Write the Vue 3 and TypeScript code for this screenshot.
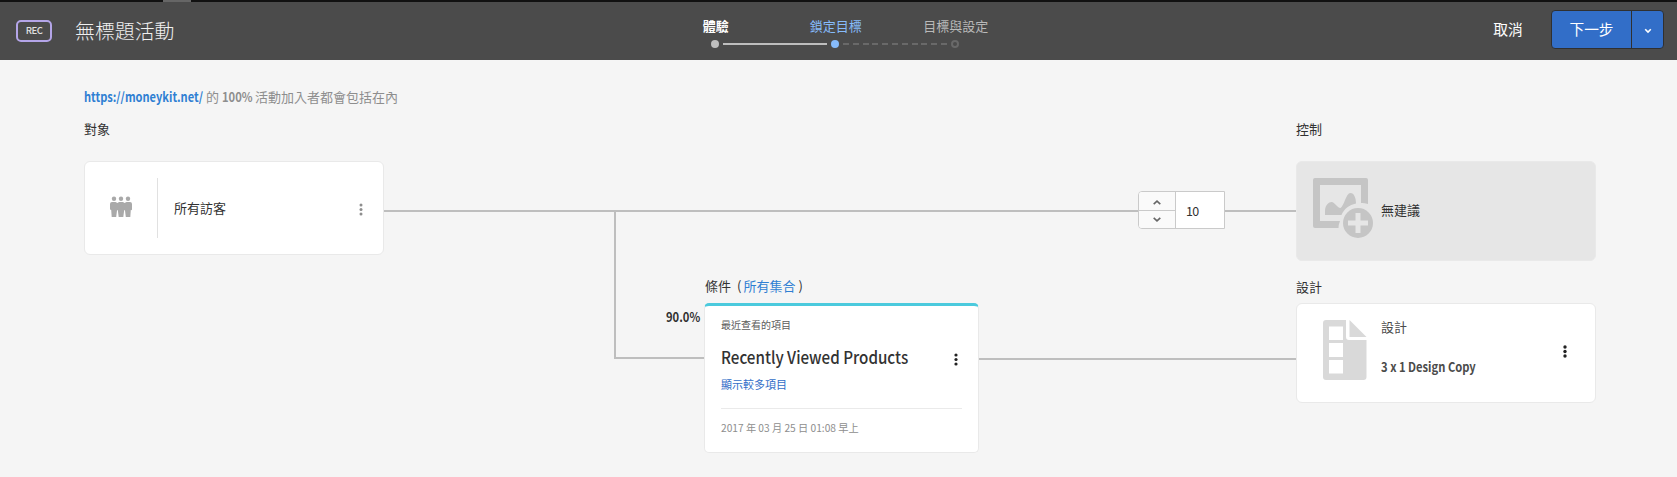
<script setup lang="ts">
import { ref } from 'vue'

interface Step {
  label: string
  state: 'done' | 'current' | 'todo'
}

const steps: Step[] = [
  { label: '體驗', state: 'done' },
  { label: '鎖定目標', state: 'current' },
  { label: '目標與設定', state: 'todo' },
]
const controlShare = ref(10)
const dots = [2, 6.5, 11]
</script>

<template>
  <div class="page">
    <header class="bar">
      <div class="strip"><span class="strip-tab"></span></div>
      <div class="bar-row">
        <span class="badge">REC</span>
        <h1 class="title">無標題活動</h1>
        <ol class="steps">
          <li v-for="s in steps" :key="s.label" class="step" :class="s.state">
            <span class="step-label">{{ s.label }}</span>
            <span class="step-dot"></span>
          </li>
        </ol>
        <button class="cancel">取消</button>
        <div class="split">
          <button class="next">下一步</button>
          <button class="more" aria-label="more">
            <svg width="8" height="6" viewBox="0 0 8 6"><path d="M1.2 1.2 4 4 6.8 1.2" fill="none" stroke="#fff" stroke-width="1.6" /></svg>
          </button>
        </div>
      </div>
    </header>

    <main class="canvas">
      <svg class="wires" width="1677" height="417" viewBox="0 60 1677 417">
        <path d="M384 211H1296M615 211V358H704M978 359H1296" fill="none" stroke="#bebebe" stroke-width="2" />
      </svg>

      <p class="label intro">
        <span class="url"><b class="narrow">https://moneykit.net/</b></span>
        <span class="of">的</span>
        <span class="pct"><b class="narrow">100%</b></span>
        <span>活動加入者都會包括在內</span>
      </p>
      <h2 class="label audience-h">對象</h2>
      <h2 class="label control-h">控制</h2>
      <h2 class="label design-h">設計</h2>
      <h2 class="label criteria-h">條件<span class="open">(</span><a>所有集合</a><span class="close">)</span></h2>
      <b class="label share narrow">90.0%</b>

      <section class="card audience">
        <svg class="people" width="24" height="22" viewBox="0 0 24 22" fill="#a9a9a9">
          <circle cx="5" cy="2.8" r="2.2" /><circle cx="12" cy="2.8" r="2.2" /><circle cx="19" cy="2.8" r="2.2" />
          <path d="M3 6H6.500L8.500 7 10 6H14L15.500 7 17.500 6H21Q23 6 23 8V13.500Q22.500 14.500 21.800 14L21.300 21H16.800L16 14.500 15.200 14 14.300 21H9.700L8.800 14 8 14.500 7.200 21H2.700L2.200 14Q1 14 1 13V8Q1 6 3 6Z" />
        </svg>
        <span class="rule"></span>
        <span class="name">所有訪客</span>
        <svg class="kebab" width="4" height="13" viewBox="0 0 4 13" fill="#8e8e8e"><circle v-for="y in dots" :key="y" cx="2" :cy="y" r="1.500" /></svg>
      </section>

      <div class="stepper">
        <div class="arrows">
          <span><svg width="8" height="5" viewBox="0 0 8 5"><path d="M.7 4.200 4 1.200 7.300 4.200" fill="none" stroke="#666" stroke-width="1.600" /></svg></span>
          <span><svg width="8" height="5" viewBox="0 0 8 5"><path d="M.7.8 4 3.800 7.300.8" fill="none" stroke="#666" stroke-width="1.600" /></svg></span>
        </div>
        <span class="value">{{ controlShare }}</span>
      </div>

      <section class="card control">
        <svg width="60" height="60" viewBox="0 0 60 60">
          <path fill="#c5c5c5" fill-rule="evenodd" d="M2 0H53Q55 0 55 2V26Q50 24.500 48 25V7H7V43H27Q25.500 46.500 25.500 50H2Q0 50 0 48V2Q0 0 2 0Z" />
          <path fill="#c5c5c5" d="M12 37V33C12 27 16 24 18.500 24C22 24 24 30 27.500 30C31 28 33 15 37.500 15C41 15 43 20 43 25.500C36 27 31 31 28.500 37Z" />
          <circle cx="45" cy="45" r="15" fill="#c5c5c5" />
          <path d="M45 35V55M35 45H55" stroke="#e6e6e6" stroke-width="5" />
        </svg>
        <span class="name">無建議</span>
      </section>

      <section class="card criteria">
        <span class="kind">最近查看的項目</span>
        <div class="headline">
          <strong>Recently Viewed Products</strong>
          <svg width="4" height="13" viewBox="0 0 4 13" fill="#222"><circle v-for="y in dots" :key="y" cx="2" :cy="y" r="1.600" /></svg>
        </div>
        <a class="show">顯示較多項目</a>
        <time>2017 年 03 月 25 日 01:08 早上</time>
      </section>

      <section class="card design">
        <svg width="44" height="60" viewBox="0 0 44 60">
          <path fill="#d9d9d9" fill-rule="evenodd" d="M3 0H23V17Q23 20 26 20H43.500V57Q43.500 60 40.500 60H3Q0 60 0 57V3Q0 0 3 0ZM6 6.500V20H20V6.500ZM6 23V37H20V23ZM6 40V53.500H20V40Z" />
          <path fill="#d9d9d9" d="M26.500 0 43.500 17H26.500Z" />
        </svg>
        <div class="info">
          <span>設計</span>
          <b class="narrow">3 x 1 Design Copy</b>
        </div>
        <svg class="kebab" width="4" height="13" viewBox="0 0 4 13" fill="#222"><circle v-for="y in dots" :key="y" cx="2" :cy="y" r="1.700" /></svg>
      </section>
    </main>
  </div>
</template>

<style>
body { margin: 0; background: #f5f5f5; }
</style>

<style scoped>
.page {
  width: 1677px; height: 477px; overflow: hidden; background: #f5f5f5;
  font-family: "Noto Sans CJK TC", "Noto Sans", sans-serif;
  font-size: 13px; line-height: 20px; color: #323232; white-space: nowrap;
}
.page * { box-sizing: border-box; }
h1, h2, p, ol { margin: 0; padding: 0; font-weight: 400; }
button { font: inherit; border: 0; padding: 0; background: none; color: inherit; }
.narrow { display: inline-block; transform: scaleX(.86); transform-origin: 0 50%; }
.bar { height: 60px; background: #4b4b4b; color: #fff; }
.strip { height: 2px; background: #111; padding-left: 163px; display: flex; }
.strip-tab { width: 28px; background: #666; }
.bar-row { height: 58px; display: flex; align-items: flex-start; }
.badge {
  margin: 18px 0 0 16px; width: 36px; height: 22px; border: 2px solid #b4a5e8; border-radius: 5px;
  font-size: 9.500px; line-height: 17px; text-align: center; letter-spacing: -.5px; font-weight: 500; color: #e0e0e0;
}
.title { margin: 14px 0 0 23px; width: 580px; font-size: 19.900px; line-height: 30px; font-weight: 300; color: #f0f0f0; }
.steps { list-style: none; display: flex; width: 360px; margin: 14px 0 0 0; }
.step { position: relative; width: 120px; flex: none; display: flex; flex-direction: column; align-items: center; }
.step-label { line-height: 20px; height: 24px; margin-left: 1.500px; }
.step-dot { width: 8px; height: 8px; border-radius: 50%; background: #bebebe; }
.step.done .step-label { font-weight: 700; }
.step.current { color: #86bbfb; }
.step.current .step-dot { background: #86bbfb; }
.step.todo { color: #b9b9b9; }
.step.todo .step-dot { background: none; border: 2px solid #696969; }
.step::after { content: ""; position: absolute; left: 68px; top: 27px; width: 104px; height: 2px; }
.step.done::after { background: #bebebe; }
.step.current::after { background: repeating-linear-gradient(90deg, #696969 0 6px, transparent 6px 9.800px); }
.step.todo::after { display: none; }
.cancel { margin: 17px 0 0 478px; width: 30px; font-size: 14.700px; line-height: 20px; }
.split { display: flex; margin: 8px 0 0 28px; width: 113px; height: 39px; border: 1px solid #303030; border-radius: 4px; background: #326ec8; }
.next { width: 80px; border-right: 1px solid #303030; font-size: 14.700px; line-height: 36px; padding-bottom: 2px; }
.more { flex: 1; display: flex; align-items: center; justify-content: center; padding-top: 2px; }

.canvas { position: relative; height: 417px; }
.wires { position: absolute; left: 0; top: 0; }
.label { position: absolute; font-size: 13px; line-height: 20px; }
.intro { left: 84px; top: 27px; color: #8e8e8e; display: flex; }
.url { color: #2f7fd3; width: 122px; }
.url .narrow { transform: scaleX(.852); }
.of { width: 16px; }
.pct { width: 33px; }
.audience-h { left: 84px; top: 59px; }
.control-h { left: 1296px; top: 59px; }
.design-h { left: 1296px; top: 217px; }
.criteria-h { left: 705px; top: 216px; }
.criteria-h a { color: #2f7fd3; }
.open { margin: 0 2px 0 6px; }
.close { margin-left: 3px; }
.share { left: 666px; top: 247px; }
.card { position: absolute; background: #fff; border: 1px solid #e9e9e9; border-radius: 6px; display: flex; }
.audience { left: 84px; top: 101px; width: 300px; height: 94px; }
.people { margin: 34px 0 0 24px; }
.rule { width: 1px; height: 60px; margin: 16px 16px 0 24px; background: #e1e1e1; }
.audience .name { margin-top: 36px; width: 185px; }
.audience .kebab { margin-top: 41px; }
.stepper {
  position: absolute; left: 1138px; top: 131px; width: 87px; height: 38px; display: flex;
  background: #fff; border: 1px solid #cacaca; border-radius: 4px 0 0 4px;
}
.arrows { width: 37px; background: #fafafa; border-right: 1px solid #cacaca; display: flex; flex-direction: column; border-radius: 3px 0 0 3px; }
.arrows span { height: 18px; display: flex; align-items: center; justify-content: center; padding-top: 3px; }
.arrows span + span { border-top: 1px solid #cacaca; padding-top: 0; }
.value { padding-left: 10px; line-height: 37px; font-size: 12.500px; letter-spacing: -.8px; }
.control { left: 1296px; top: 101px; width: 300px; height: 100px; background: #e6e6e6; padding: 16px 0 0 16px; }
.control .name { margin: 22px 0 0 8px; }
.criteria { left: 704px; top: 243px; width: 275px; height: 150px; border-top: 3px solid #4bcadd; border-radius: 5px; flex-direction: column; padding: 0 16px; }
.kind { margin-top: 9px; font-size: 10px; color: #5c5c5c; }
.headline { display: flex; justify-content: space-between; margin-top: 8px; height: 28px; padding-right: 4px; }
.headline strong { font-size: 17px; line-height: 28px; font-weight: 500; transform: scaleX(.893); transform-origin: 0 50%; }
.headline svg { margin-top: 10px; }
.show { margin-top: 3px; font-size: 11px; color: #326ec8; }
time { margin-top: 14px; border-top: 1px solid #eaeaea; padding-top: 9px; font-size: 10.200px; color: #8e8e8e; }
.design { left: 1296px; top: 243px; width: 300px; height: 100px; padding: 16px 0 0 26px; }
.info { width: 182px; margin-left: 14px; display: flex; flex-direction: column; gap: 20px; margin-top: -3px; color: #4b4b4b; }
.design .kebab { margin-top: 25px; }
</style>
